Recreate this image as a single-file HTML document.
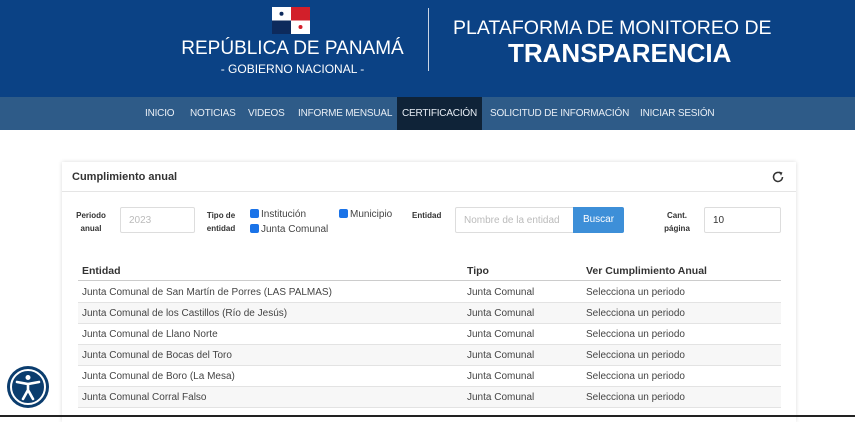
<!DOCTYPE html>
<html><head><meta charset="utf-8"><style>
*{box-sizing:border-box;margin:0;padding:0}
body{width:855px;height:417px;overflow:hidden;background:#fff;font-family:"Liberation Sans",sans-serif;position:relative;color:#333}
.hdr{position:absolute;left:0;top:0;width:855px;height:97px;background:#0b4285}
.nav{position:absolute;left:0;top:97px;width:855px;height:33px;background:#2e5b88}
.nav span{position:absolute;top:0;height:33px;line-height:34px;color:#e8eef5;font-size:10px;letter-spacing:-0.2px;white-space:nowrap}
.card{position:absolute;left:62px;top:162px;width:734px;height:260px;background:#fff;box-shadow:0 0 4px rgba(0,0,0,.15)}
.ch{height:30px;border-bottom:1px solid #e5e5e5;font-size:11px;font-weight:bold;color:#333;padding:9px 10px}
.lbl{position:absolute;font-size:8px;font-weight:bold;text-align:center;line-height:13px;color:#333}
.inp{position:absolute;border:1px solid #ddd;border-radius:2px;font-size:10px;color:#bbb;padding:7px 8px;height:26px}
.cb{position:absolute;font-size:10px;color:#444}
.cb i{display:inline-block;width:9px;height:9px;background:#1a73e8;border-radius:2px;vertical-align:-1px;margin-right:2px}
.row{position:absolute;left:16px;width:703px;height:21px;border-bottom:1px solid #e3e3e3;font-size:10px;color:#444;line-height:22px}
.row span{position:absolute}
</style></head><body>
<div class="hdr">
 <svg style="position:absolute;left:272px;top:7px" width="38" height="27"><rect width="19" height="13.5" fill="#fff"/><rect x="19" width="19" height="13.5" fill="#d21f2a"/><rect y="13.5" width="19" height="13.5" fill="#0d2a5c"/><rect x="19" y="13.5" width="19" height="13.5" fill="#fff"/><circle cx="9.5" cy="6.7" r="2" fill="#0d2a5c"/><circle cx="28.5" cy="20" r="2" fill="#d21f2a"/></svg>
 <div style="position:absolute;left:175px;top:38px;width:235px;text-align:center;color:#fff;font-size:19px">REPÚBLICA DE PANAMÁ</div>
 <div style="position:absolute;left:175px;top:62px;width:235px;text-align:center;color:#fff;font-size:12px">- GOBIERNO NACIONAL -</div>
 <div style="position:absolute;left:428px;top:8px;width:1px;height:63px;background:#c9d4e4"></div>
 <div style="position:absolute;left:453px;top:17px;color:#fff;font-size:19.5px">PLATAFORMA DE MONITOREO DE</div>
 <div style="position:absolute;left:508px;top:38px;color:#fff;font-size:26px;font-weight:bold">TRANSPARENCIA</div>
</div>
<div class="nav">
 <span style="left:145px">INICIO</span><span style="left:190px">NOTICIAS</span><span style="left:248px">VIDEOS</span><span style="left:298px">INFORME MENSUAL</span>
 <span style="left:397px;width:85px;background:#0f2338;text-align:center">CERTIFICACIÓN</span>
 <span style="left:490px">SOLICITUD DE INFORMACIÓN</span><span style="left:640px">INICIAR SESIÓN</span>
</div>
<div class="card">
 <div class="ch">Cumplimiento anual</div>
 <svg style="position:absolute;left:709px;top:8px" width="14" height="14" viewBox="0 0 14 14"><path d="M11.5 7A4.5 4.5 0 1 1 9.5 3.2" fill="none" stroke="#333" stroke-width="1.5"/><path d="M8 1.5L11.5 2.5L10 5.8Z" fill="#333"/></svg>
 <div class="lbl" style="left:10px;top:47px;width:38px">Periodo<br>anual</div>
 <div class="inp" style="left:58px;top:45px;width:75px">2023</div>
 <div class="lbl" style="left:142px;top:47px;width:34px">Tipo de<br>entidad</div>
 <div class="cb" style="left:188px;top:47px"><i></i>Institución</div>
 <div class="cb" style="left:188px;top:62px"><i></i>Junta Comunal</div>
 <div class="cb" style="left:277px;top:47px"><i></i>Municipio</div>
 <div class="lbl" style="left:350px;top:47px">Entidad</div>
 <div class="inp" style="left:393px;top:45px;width:120px;border-radius:2px 0 0 2px">Nombre de la entidad</div>
 <div style="position:absolute;left:511px;top:45px;width:51px;height:26px;background:#3d8fd8;color:#fff;font-size:10px;text-align:center;line-height:26px;border-radius:0 2px 2px 0">Buscar</div>
 <div class="lbl" style="left:600px;top:47px;width:30px">Cant.<br>página</div>
 <div class="inp" style="left:642px;top:45px;width:77px;color:#333">10</div>
 <div class="row" style="top:98px;font-weight:bold;color:#333;font-size:10.5px;border-bottom:1px solid #ccc"><span style="left:4px">Entidad</span><span style="left:389px">Tipo</span><span style="left:508px">Ver Cumplimiento Anual</span></div>
 <div class="row" style="top:120px"><span style="left:4px">Junta Comunal de San Martín de Porres (LAS PALMAS)</span><span style="left:389px">Junta Comunal</span><span style="left:508px">Selecciona un periodo</span></div>
 <div class="row" style="top:141px;background:#f7f7f7"><span style="left:4px">Junta Comunal de los Castillos (Río de Jesús)</span><span style="left:389px">Junta Comunal</span><span style="left:508px">Selecciona un periodo</span></div>
 <div class="row" style="top:162px"><span style="left:4px">Junta Comunal de Llano Norte</span><span style="left:389px">Junta Comunal</span><span style="left:508px">Selecciona un periodo</span></div>
 <div class="row" style="top:183px;background:#f7f7f7"><span style="left:4px">Junta Comunal de Bocas del Toro</span><span style="left:389px">Junta Comunal</span><span style="left:508px">Selecciona un periodo</span></div>
 <div class="row" style="top:204px"><span style="left:4px">Junta Comunal de Boro (La Mesa)</span><span style="left:389px">Junta Comunal</span><span style="left:508px">Selecciona un periodo</span></div>
 <div class="row" style="top:225px;background:#f7f7f7"><span style="left:4px">Junta Comunal Corral Falso</span><span style="left:389px">Junta Comunal</span><span style="left:508px">Selecciona un periodo</span></div>
</div>
<svg style="position:absolute;left:6px;top:365px" width="44" height="44" viewBox="0 0 44 44"><circle cx="22" cy="22" r="21" fill="#0b3d6e"/><circle cx="22" cy="22" r="17" fill="none" stroke="#fff" stroke-width="2"/><circle cx="22" cy="12.5" r="2.5" fill="#fff"/><path d="M11 17L22 19L33 17M22 19V25M22 25L17 34M22 25L27 34" fill="none" stroke="#fff" stroke-width="2.6" stroke-linecap="round"/></svg>
<div style="position:absolute;left:0;top:415px;width:855px;height:2px;background:#222"></div>
</body></html>
